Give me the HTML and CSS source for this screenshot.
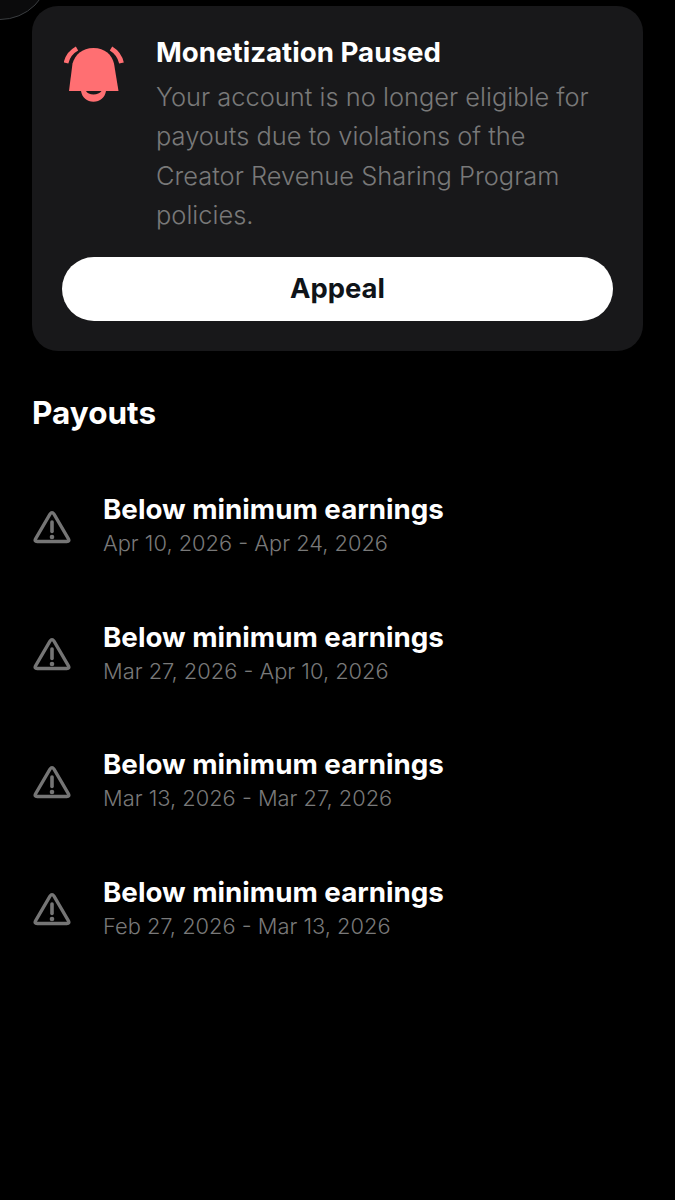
FILE: index.html
```html
<!DOCTYPE html>
<html lang="en">
<head>
<meta charset="utf-8">
<title>Payouts</title>
<link rel="stylesheet" href="styles.css">
</head>
<body>
<div class="avatar-edge"></div>
<main class="page">
  <section class="card">
    <div class="notice">
      <svg class="bell" viewBox="0 0 60 56" aria-hidden="true">
        <path fill="#ff6f72" d="M29.500 2C41 2 48 9 50 17.500L54.500 45H5L8.500 17.500C11 9 18 2 29.500 2Z"/>
        <path fill="#ff6f72" fill-rule="evenodd" d="M17 45H42C41 51.500 36 55.800 29.500 55.800C23 55.800 18 51.500 17 45ZM22 45C23 47 26 48.500 29.500 48.500C33 48.500 36 47 37.500 45Z"/>
        <path fill="none" stroke="#ff6f72" stroke-width="4.800" d="M13 2.500C7.500 5.500 3.500 10.500 2 17"/>
        <path fill="none" stroke="#ff6f72" stroke-width="4.800" d="M47 2.500C52 5.500 56 10.500 57.500 17"/>
      </svg>
      <div class="notice-text">
        <h2 class="notice-title">Monetization Paused</h2>
        <p class="notice-body">Your account is no longer eligible for payouts due to violations of the Creator Revenue Sharing Program policies.</p>
      </div>
    </div>
    <button class="appeal" type="button">Appeal</button>
  </section>

  <h1 class="section-title">Payouts</h1>

  <ul class="payouts">
    <li class="payout">
      <svg class="warn" viewBox="0 0 38 34" aria-hidden="true"><path class="warn-tri" d="M17 4.200Q19 1.200 21 4.200L35.300 28.600Q37 31.500 33.800 31.500H4.200Q1 31.500 2.700 28.600Z"/><path class="warn-bar" d="M19 12V21.500"/><circle class="warn-dot" cx="19" cy="27" r="2.300"/></svg>
      <div><div class="payout-title">Below minimum earnings</div><div class="payout-date">Apr 10, 2026 - Apr 24, 2026</div></div>
    </li>
    <li class="payout">
      <svg class="warn" viewBox="0 0 38 34" aria-hidden="true"><path class="warn-tri" d="M17 4.200Q19 1.200 21 4.200L35.300 28.600Q37 31.500 33.800 31.500H4.200Q1 31.500 2.700 28.600Z"/><path class="warn-bar" d="M19 12V21.500"/><circle class="warn-dot" cx="19" cy="27" r="2.300"/></svg>
      <div><div class="payout-title">Below minimum earnings</div><div class="payout-date">Mar 27, 2026 - Apr 10, 2026</div></div>
    </li>
    <li class="payout">
      <svg class="warn" viewBox="0 0 38 34" aria-hidden="true"><path class="warn-tri" d="M17 4.200Q19 1.200 21 4.200L35.300 28.600Q37 31.500 33.800 31.500H4.200Q1 31.500 2.700 28.600Z"/><path class="warn-bar" d="M19 12V21.500"/><circle class="warn-dot" cx="19" cy="27" r="2.300"/></svg>
      <div><div class="payout-title">Below minimum earnings</div><div class="payout-date">Mar 13, 2026 - Mar 27, 2026</div></div>
    </li>
    <li class="payout">
      <svg class="warn" viewBox="0 0 38 34" aria-hidden="true"><path class="warn-tri" d="M17 4.200Q19 1.200 21 4.200L35.300 28.600Q37 31.500 33.800 31.500H4.200Q1 31.500 2.700 28.600Z"/><path class="warn-bar" d="M19 12V21.500"/><circle class="warn-dot" cx="19" cy="27" r="2.300"/></svg>
      <div><div class="payout-title">Below minimum earnings</div><div class="payout-date">Feb 27, 2026 - Mar 13, 2026</div></div>
    </li>
  </ul>
</main>
</body>
</html>
```
FILE: styles.css
```css
* { box-sizing: border-box; }
html, body { margin: 0; height: 100%; background: #000; overflow: hidden; }
body { font-family: Inter, "Liberation Sans", sans-serif; color: #fff; position: relative; }

.avatar-edge {
  position: absolute;
  left: -50px;
  top: -80px;
  width: 100px;
  height: 100px;
  background: #0b0b0c;
  border: 1.500px solid #3a3d40;
  border-radius: 50%;
}

.page { padding: 6px 32px 0; position: relative; }

.card {
  background: #18181a;
  border-radius: 26px;
  padding: 30px;
}

.notice { display: flex; gap: 32px; }
.bell { width: 60px; height: 56px; flex: none; margin: 10px 0 0 2px; }
.notice-text { flex: 1; min-width: 0; margin-top: -3px; }
.notice-title { margin: 0; font-size: 27.700px; line-height: 38px; font-weight: 700; }
.notice-body { margin: 6px 0 0; font-size: 25.450px; line-height: 39.300px; font-weight: 300; color: #797979; }

.appeal {
  display: block;
  width: 100%;
  height: 64px;
  margin-top: 23px;
  border: 0;
  border-radius: 32px;
  background: #fff;
  color: #0f1419;
  font: 700 27.400px/1 Inter, "Liberation Sans", sans-serif;
}

.section-title { margin: 42px 0 0; font-size: 31.500px; line-height: 40px; font-weight: 700; }

.payouts { list-style: none; margin: 56px 0 0; padding: 0; display: flex; flex-direction: column; gap: 59.600px; }
.payout { display: flex; align-items: center; gap: 32px; }
.warn { width: 38px; height: 34px; flex: none; margin: 7px 0 0 1px; }
.warn-tri { fill: none; stroke: #757575; stroke-width: 3.300; stroke-linejoin: round; }
.warn-bar { fill: none; stroke: #757575; stroke-width: 3.600; stroke-linecap: round; }
.warn-dot { fill: #757575; }
.payout-title { font-size: 27.750px; line-height: 40px; font-weight: 700; }
.payout-date { font-size: 21.850px; line-height: 28px; font-weight: 300; color: #797979; }
```
